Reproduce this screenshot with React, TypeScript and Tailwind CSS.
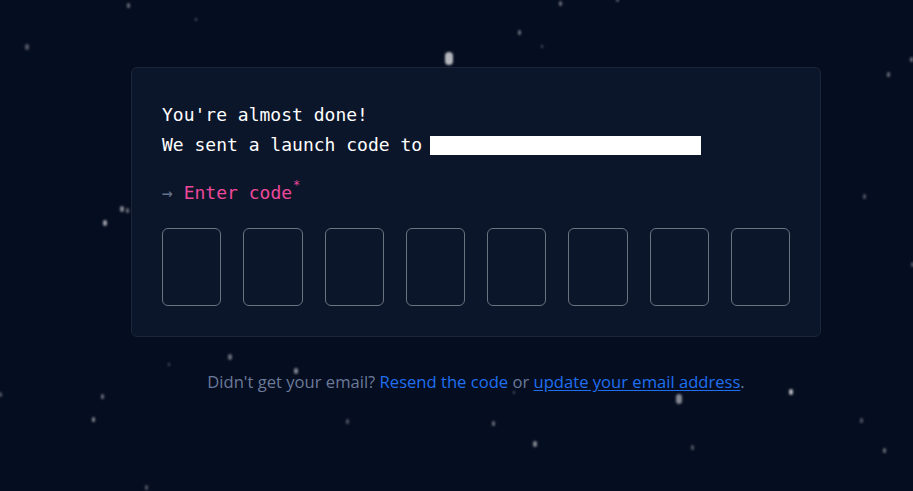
import React from "react";

const stars: [number, number, number, number][] = [
  // x, y, size, opacity
  [128, 6, 3, 0.4],
  [560, 4, 3, 0.4],
  [617, 0, 3, 0.3],
  [196, 20, 2, 0.3],
  [519, 33, 3, 0.4],
  [27, 48, 4, 0.3],
  [542, 47, 2, 0.3],
  [449, 60, 8, 0.7],
  [911, 60, 3, 0.4],
  [888, 75, 3, 0.4],
  [864, 197, 3, 0.3],
  [122, 210, 4, 0.5],
  [127, 211, 3, 0.4],
  [105, 224, 4, 0.6],
  [912, 265, 3, 0.3],
  [230, 358, 4, 0.4],
  [169, 365, 2, 0.3],
  [296, 372, 4, 0.5],
  [102, 397, 3, 0.4],
  [93, 420, 3, 0.5],
  [347, 422, 3, 0.3],
  [493, 424, 3, 0.4],
  [535, 445, 4, 0.5],
  [679, 400, 6, 0.5],
  [791, 393, 4, 0.7],
  [861, 421, 3, 0.3],
  [692, 448, 3, 0.3],
  [884, 451, 3, 0.4],
  [146, 488, 3, 0.3],
  [514, 393, 2, 0.3],
  [0, 395, 3, 0.3],
];

export default function App() {
  return (
    <div className="relative w-[913px] h-[491px] overflow-hidden bg-[#050d20]">
      {stars.map(([x, y, s, o], i) => (
        <div
          key={i}
          className="absolute rounded-full bg-white blur-[1px]"
          style={{ left: x - s / 2, top: y - s, width: s, height: s * 1.6, opacity: o }}
        />
      ))}
      <div className="relative pt-[67px] pl-[131px]">
        <div className="w-[690px] rounded-md border border-[#1c2539] bg-[#0c162b] px-[30px] pt-8 pb-[30px]">
          <div className="font-['DejaVu_Sans_Mono',monospace] text-[18px] leading-[30px] text-white">
            <p>You're almost done!</p>
            <p className="flex items-center">
              <span>We sent a launch code to</span>
              <span className="ml-[8px] inline-block h-[19px] w-[271px] bg-white" />
            </p>
            <p className="mt-[18px] h-[30px] text-[#ec4899]">
              <span className="text-[#64748b]">→ </span>Enter code
              <span className="relative -top-[8px] ml-[1px] align-top text-[12px] leading-[30px]">*</span>
            </p>
          </div>
          <div className="mt-5 flex gap-[22px]">
            {Array.from({ length: 8 }).map((_, i) => (
              <div key={i} className="h-[78px] flex-1 rounded-md border border-[#6b7280]" />
            ))}
          </div>
        </div>
        <p className="mt-[33px] w-[690px] text-center font-['Open_Sans',sans-serif] text-[16.6px] text-[#6b7a99]">
          Didn't get your email? <span className="text-[#1f6ff0]">Resend the code</span> or{" "}
          <span className="text-[#1f6ff0] underline underline-offset-2">update your email address</span>.
        </p>
      </div>
    </div>
  );
}
